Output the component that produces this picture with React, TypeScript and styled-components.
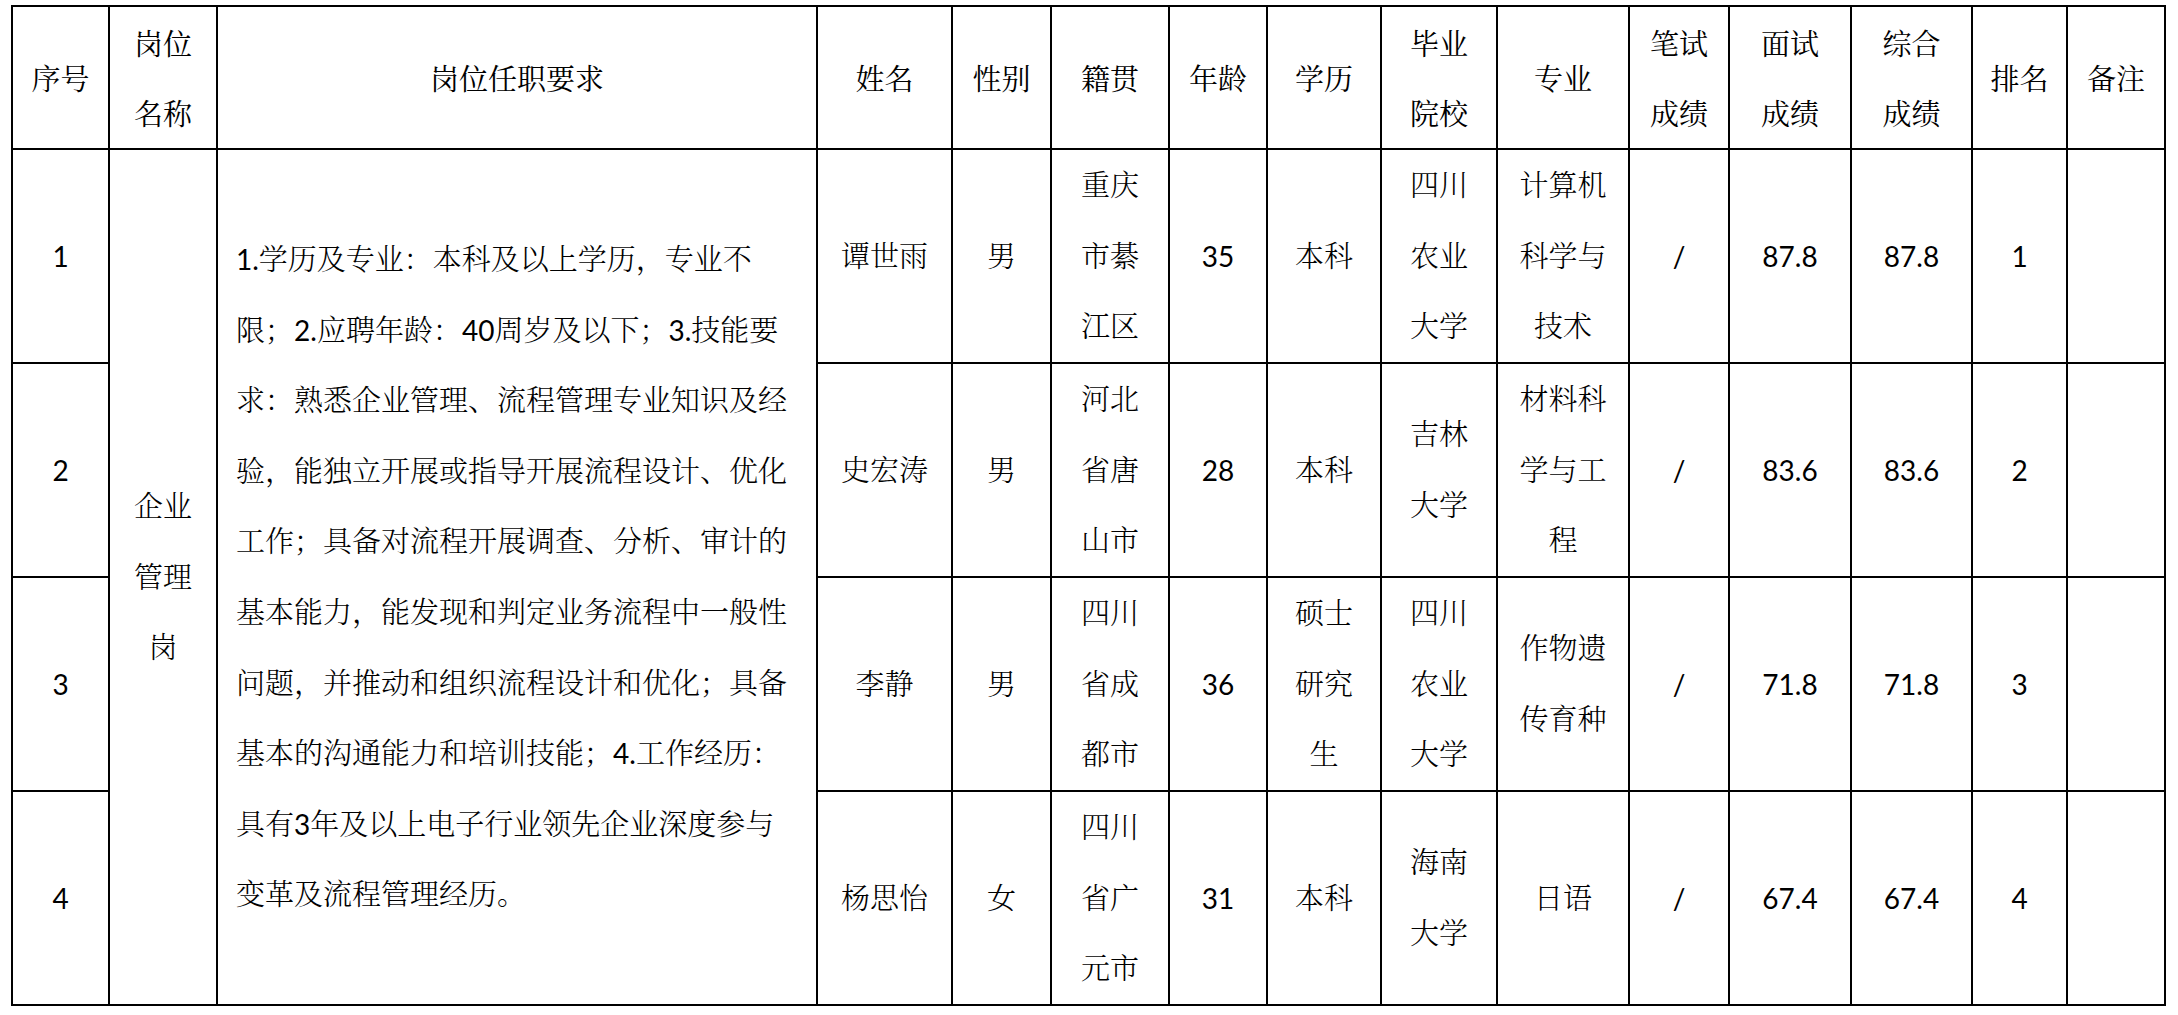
import React from 'react'
import styled, { createGlobalStyle } from 'styled-components'

const GlobalStyle = createGlobalStyle`
  html, body {
    margin: 0;
    padding: 0;
    background: #ffffff;
  }
  body {
    font-family: "Lato", "Noto Serif CJK SC", "Noto Sans CJK SC", sans-serif;
    color: #000000;
  }
`

type Candidate = {
  no: number,
  name: string,
  gender: string,
  origin: string,
  age: string,
  degree: string,
  school: string,
  major: string,
  written: string,
  interview: string,
  total: string,
  rank: string
}

const colWidths = [97, 108, 600, 135, 99, 118, 98, 114, 116, 132, 100, 122, 121, 95, 98]

const headers = [
  '序号', '岗位\n名称', '岗位任职要求', '姓名', '性别', '籍贯', '年龄', '学历',
  '毕业\n院校', '专业', '笔试\n成绩', '面试\n成绩', '综合\n成绩', '排名', '备注'
]

const requirement = [
  '1.学历及专业：本科及以上学历，专业不',
  '限；2.应聘年龄：40周岁及以下；3.技能要',
  '求：熟悉企业管理、流程管理专业知识及经',
  '验，能独立开展或指导开展流程设计、优化',
  '工作；具备对流程开展调查、分析、审计的',
  '基本能力，能发现和判定业务流程中一般性',
  '问题，并推动和组织流程设计和优化；具备',
  '基本的沟通能力和培训技能；4.工作经历：',
  '具有3年及以上电子行业领先企业深度参与',
  '变革及流程管理经历。'
].join('\n')

const candidates: Candidate[] = [
  {
    no: 1, name: '谭世雨', gender: '男', origin: '重庆\n市綦\n江区', age: '35',
    degree: '本科', school: '四川\n农业\n大学', major: '计算机\n科学与\n技术',
    written: '/', interview: '87.8', total: '87.8', rank: '1'
  },
  {
    no: 2, name: '史宏涛', gender: '男', origin: '河北\n省唐\n山市', age: '28',
    degree: '本科', school: '吉林\n大学', major: '材料科\n学与工\n程',
    written: '/', interview: '83.6', total: '83.6', rank: '2'
  },
  {
    no: 3, name: '李静', gender: '男', origin: '四川\n省成\n都市', age: '36',
    degree: '硕士\n研究\n生', school: '四川\n农业\n大学', major: '作物遗\n传育种',
    written: '/', interview: '71.8', total: '71.8', rank: '3'
  },
  {
    no: 4, name: '杨思怡', gender: '女', origin: '四川\n省广\n元市', age: '31',
    degree: '本科', school: '海南\n大学', major: '日语',
    written: '/', interview: '67.4', total: '67.4', rank: '4'
  }
]

// digits are set in a latin face at regular weight, the CJK around them stays light
function withDigits (text: string) {
  return text.split(/([0-9./]+)/).map((part, i) =>
    i % 2 === 1 ? <Digits key={i}>{part}</Digits> : part
  )
}

export default function App () {
  return (
    <Page>
      <GlobalStyle />
      <Table>
        <colgroup>
          {colWidths.map((w, i) => <col key={i} style={{ width: w }} />)}
        </colgroup>
        <thead>
          <HeadRow>
            {headers.map(h => <HeadCell key={h}>{h}</HeadCell>)}
          </HeadRow>
        </thead>
        <tbody>
          {candidates.map((c, i) => (
            <BodyRow key={c.no}>
              <Cell>{withDigits(String(c.no))}</Cell>
              {i === 0 && (
                <>
                  <Cell rowSpan={4}>{'企业\n管理\n岗'}</Cell>
                  <Cell rowSpan={4} $align="left">{withDigits(requirement)}</Cell>
                </>
              )}
              <Cell>{c.name}</Cell>
              <Cell>{c.gender}</Cell>
              <Cell>{c.origin}</Cell>
              <Cell>{withDigits(c.age)}</Cell>
              <Cell>{c.degree}</Cell>
              <Cell>{c.school}</Cell>
              <Cell>{c.major}</Cell>
              <Cell>{withDigits(c.written)}</Cell>
              <Cell>{withDigits(c.interview)}</Cell>
              <Cell>{withDigits(c.total)}</Cell>
              <Cell>{withDigits(c.rank)}</Cell>
              <Cell />
            </BodyRow>
          ))}
        </tbody>
      </Table>
    </Page>
  )
}

const Page = styled.div`
  padding: 5px 0 0 11px;
`

const Table = styled.table`
  border-collapse: collapse;
  table-layout: fixed;
  width: 2153px;
  border: 2px solid #000000;
`

const HeadRow = styled.tr`
  height: 143px;
`

const BodyRow = styled.tr`
  height: 214px;
`

const HeadCell = styled.th`
  border: 2px solid #000000;
  padding: 0;
  font-family: "Noto Serif CJK SC", "Noto Sans CJK SC", serif;
  font-weight: 400;
  font-size: 29px;
  line-height: 70px;
  text-align: center;
  vertical-align: middle;
  white-space: pre-line;
`

const Cell = styled.td<{ $align?: 'left' | 'center' }>`
  border: 2px solid #000000;
  padding: ${p => (p.$align === 'left' ? '0 0 0 18px' : '0')};
  font-size: 29px;
  font-weight: 300;
  line-height: 70.6px;
  text-align: ${p => p.$align ?? 'center'};
  vertical-align: middle;
  white-space: pre-line;
`

const Digits = styled.span`
  font-family: "Lato", "Liberation Sans", sans-serif;
  font-weight: 400;
  font-size: 28px;
`
